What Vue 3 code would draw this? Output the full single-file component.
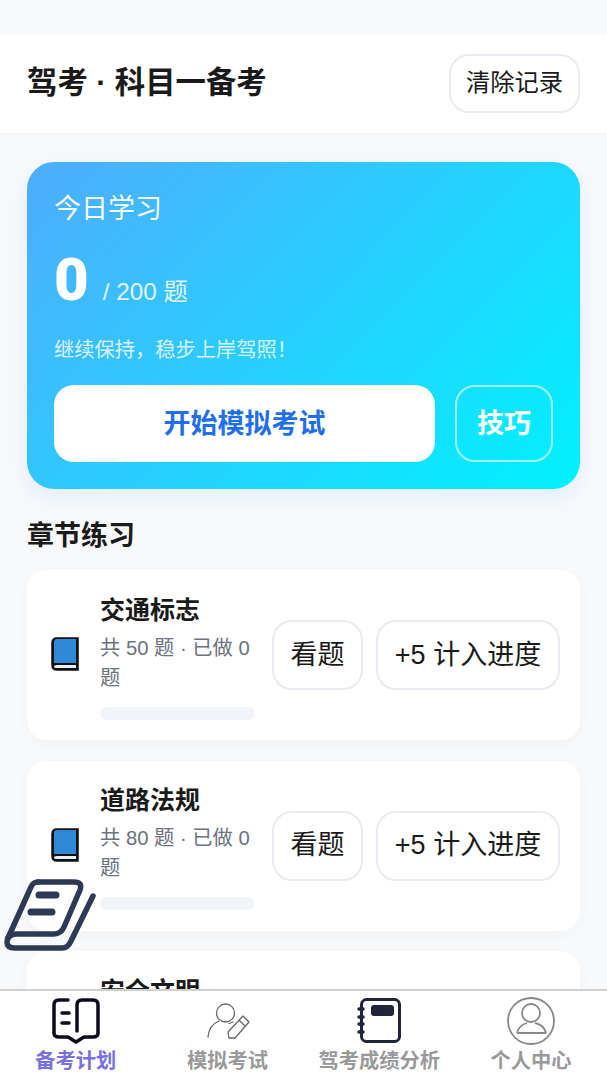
<template>
  <div class="page">
    <div class="status"></div>
    <header class="header">
      <h1>驾考 · 科目一备考</h1>
      <button class="clear">清除记录</button>
    </header>

    <main class="content">
      <section class="hero">
        <div class="hero-label">今日学习</div>
        <div class="hero-count"><b>0</b><span>/ 200 题</span></div>
        <div class="hero-tip">继续保持，稳步上岸驾照！</div>
        <div class="hero-actions">
          <button class="start">开始模拟考试</button>
          <button class="tips">技巧</button>
        </div>
      </section>

      <h2 class="section">章节练习</h2>

      <div class="chapter" v-for="c in chapters" :key="c.name">
        <svg class="book" width="28" height="34" viewBox="0 0 28 34">
          <path d="M6 1H27V33H6Q1 33 1 28V6Q1 1 6 1Z" fill="#111" stroke="#111" stroke-width="1.500" />
          <path d="M6 2H25V26H3V5Q3 2 6 2Z" fill="#2f88d8" />
          <path d="M6 28H25V31H6Q3 31 3 29.500Q3 28 6 28Z" fill="#e8f1f8" />
        </svg>
        <div class="info">
          <div class="name">{{ c.name }}</div>
          <div class="sub">共 {{ c.total }} 题 · 已做 0 题</div>
          <div class="bar"></div>
        </div>
        <button class="btn look">看题</button>
        <button class="btn add">+5 计入进度</button>
      </div>
    </main>

    <svg class="float-book" width="100" height="100" viewBox="0 0 100 100" fill="none" stroke="#2e3a55" stroke-linecap="round" stroke-linejoin="round">
      <path d="M38 22H74Q83 22 80 30L64 67Q61 74 54 74H16Q7 75 7 82Q7 88 15 88H62Q68 88 71 81L93 36" stroke-width="5.500" />
      <path d="M38 22Q33 22 31 27L8 78" stroke-width="5.500" />
      <path d="M39 35H56M31 52H52" stroke-width="7" />
    </svg>

    <nav class="tabbar">
      <div class="tab active">
        <svg width="50" height="50" viewBox="0 0 50 50" fill="none" stroke="#0b0b1a" stroke-width="3.500" stroke-linecap="round" stroke-linejoin="round">
          <path d="M17 3H8Q3 3 3 8V36Q3 40 8 40H17L25 45L33 40H42Q47 40 47 36V8Q47 3 42 3H31Q26 3 26 8V34" />
          <path d="M11 16H18M11 26H18" />
        </svg>
        <span>备考计划</span>
      </div>
      <div class="tab">
        <svg width="50" height="50" viewBox="0 0 50 50" fill="none" stroke="#666" stroke-width="1.300" stroke-linejoin="round" stroke-linecap="round">
          <circle cx="22.500" cy="16" r="9" />
          <path d="M5 40Q6 28 16 24M26 26.500L30 25" />
          <path d="M40 19L46 25L32 41H26L25 35Z M36 23L42 29" />
        </svg>
        <span>模拟考试</span>
      </div>
      <div class="tab">
        <svg width="50" height="50" viewBox="0 0 50 50" fill="none">
          <rect x="7.500" y="2.500" width="38" height="42" rx="5" fill="#fff" stroke="#22243a" stroke-width="3" />
          <rect x="17" y="8" width="23" height="11" rx="3" fill="#22243a" />
          <path d="M5 12H9M5 20H9M5 27H9M5 35H9" stroke="#22243a" stroke-width="3.500" stroke-linecap="round" />
        </svg>
        <span>驾考成绩分析</span>
      </div>
      <div class="tab">
        <svg width="50" height="50" viewBox="0 0 50 50" fill="none" stroke="#888" stroke-width="1.800">
          <circle cx="25" cy="24" r="23" />
          <circle cx="25" cy="16" r="9" />
          <path d="M11 36Q13 28 21 26M40 36Q38 28 29 26M11 36H40" />
        </svg>
        <span>个人中心</span>
      </div>
    </nav>
  </div>
</template>

<script setup>
const chapters = [
  { name: '交通标志', total: 50 },
  { name: '道路法规', total: 80 },
  { name: '安全文明', total: 60 },
]
</script>

<style>
body {
  margin: 0;
}
</style>

<style scoped>
.page {
  position: relative;
  height: 1080px;
  overflow: hidden;
  background: #f8f9fb;
  font-family: "Liberation Sans", "Noto Sans CJK SC", sans-serif;
  line-height: 1.5;
  color: #1a1a1a;
}

.status {
  height: 34px;
}

.header {
  height: 99px;
  display: flex;
  align-items: center;
  justify-content: space-between;
  padding: 0 27px;
  background: #fff;
  border-bottom: 2px solid #f1f3f6;
}

.header h1 {
  margin: 0 0 2px;
  font-size: 30.400px;
  font-weight: 700;
}

button {
  font-family: inherit;
  line-height: 1.5;
  color: #1a1a1a;
  background: #fff;
  border: 2px solid #e8ebf0;
  border-radius: 20px;
  padding: 0;
}

.clear {
  width: 131px;
  height: 59px;
  font-size: 24.300px;
}

.content {
  padding: 27px;
}

.hero {
  height: 327px;
  box-sizing: border-box;
  padding: 28px 27px 27px;
  border-radius: 27px;
  color: #fff;
  background: linear-gradient(135deg, #4facfe, #00f2fe);
  box-shadow: 0 8px 24px rgba(30, 140, 255, 0.1);
}

.hero-label {
  font-size: 27px;
  line-height: 38px;
  opacity: 0.95;
}

.hero-count {
  display: flex;
  align-items: baseline;
  gap: 14px;
  margin-top: 16px;
  height: 72px;
}

.hero-count b {
  font-family: Roboto, sans-serif;
  font-size: 60px;
  font-weight: 900;
  line-height: 72px;
}

.hero-count span {
  font-size: 24.300px;
  opacity: 0.85;
}

.hero-tip {
  margin-top: 18px;
  font-size: 20.250px;
  line-height: 32px;
  opacity: 0.8;
}

.hero-actions {
  display: flex;
  gap: 20px;
  margin-top: 19px;
}

.start {
  flex: 1;
  height: 77px;
  padding-top: 2px;
  border: 0;
  font-size: 27px;
  font-weight: 700;
  color: #1f6feb;
}

.tips {
  width: 98px;
  height: 77px;
  padding-top: 2px;
  font-size: 27px;
  font-weight: 700;
  color: #fff;
  background: transparent;
  border-color: rgba(255, 255, 255, 0.6);
}

.section {
  margin: 27px 0 14px;
  font-size: 27px;
  line-height: 40px;
  font-weight: 700;
}

.chapter {
  display: flex;
  align-items: center;
  height: 170px;
  box-sizing: border-box;
  padding: 0 20px 0 24px;
  margin-bottom: 20.500px;
  background: #fff;
  border-radius: 20px;
  box-shadow: 0 4px 16px rgba(0, 0, 0, 0.03);
}

.book {
  flex: none;
  margin: -2px 21px 0 0;
}

.info {
  width: 160px;
  flex: none;
  margin-right: 12px;
}

.name {
  font-size: 25px;
  font-weight: 700;
  line-height: 38px;
}

.sub {
  margin-top: 4px;
  font-size: 20.250px;
  line-height: 30px;
  color: #6b7280;
}

.bar {
  width: 155px;
  height: 13px;
  margin-top: 14px;
  border-radius: 7px;
  background: #f1f5f9;
}

.btn {
  height: 70px;
  font-size: 27px;
  flex: none;
}

.look {
  width: 91px;
  margin-right: 13px;
}

.add {
  width: 184px;
}

.float-book {
  position: absolute;
  left: 0;
  top: 860px;
}

.tabbar {
  position: absolute;
  left: 0;
  right: 0;
  bottom: 0;
  height: 89px;
  display: flex;
  background: #fff;
  border-top: 2px solid #d0d0d0;
}

.tab {
  flex: 1;
  display: flex;
  flex-direction: column;
  align-items: center;
  padding-top: 6px;
  font-size: 20.250px;
  font-weight: 700;
  line-height: 28px;
  color: #999;
}

.tab svg {
  display: block;
}

.tab.active span {
  color: #7a6fe0;
}
</style>
